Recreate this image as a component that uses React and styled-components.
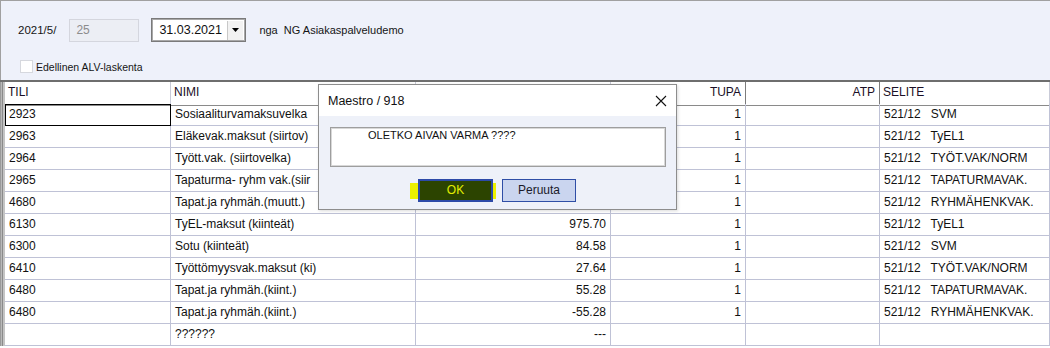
import React from 'react';
import styled, { createGlobalStyle } from 'styled-components';

const Global = createGlobalStyle`
  body {
    margin: 0;
    background: #ffffff;
    font-family: "Liberation Sans", Arial, sans-serif;
    font-size: 12px;
    color: #111;
  }
`;

const Window = styled.div`
  position: relative;
  width: 1050px;
  height: 348px;
  overflow: hidden;
  background: #fff;
`;

const TopPanel = styled.div`
  height: 79px;
  background: #eef1fa;
  border-top: 1px solid #a0a0a0;
  border-left: 1px solid #a0a0a0;
  display: flex;
  flex-direction: column;
  padding-left: 17px;
`;

const FilterRow = styled.div`
  display: flex;
  align-items: center;
  height: 24px;
  margin-top: 17px;
`;

const Label = styled.span`
  font-size: ${p => p.size || 11.5}px;
  white-space: pre;
  color: #151515;
`;

const DisabledInput = styled.div`
  width: 70px;
  height: 23px;
  box-sizing: border-box;
  border: 1px solid #d4d6de;
  background: #eceef4;
  color: #8c8c8c;
  font-size: 12px;
  line-height: 21px;
  padding-left: 6px;
  margin-left: 13px;
`;

const DateCombo = styled.div`
  width: 95px;
  height: 24px;
  box-sizing: border-box;
  border: 1px solid #7a7a7a;
  box-shadow: inset 0 0 0 1px #a8a8a8;
  background: #fff;
  margin-left: 12px;
  display: flex;
  align-items: center;
  padding-left: 7px;
  font-size: 12.5px;
  margin-right: 13px;
`;

const DateText = styled.span`
  flex: 1;
`;

const DropButton = styled.div`
  width: 15px;
  height: 19px;
  margin-right: 2px;
  background: #f2f2f2;
  border-left: 1px solid #c8c8c8;
  display: flex;
  align-items: center;
  justify-content: center;
`;

const CheckRow = styled.div`
  display: flex;
  align-items: center;
  margin-top: 18px;
  margin-left: 2px;
`;

const CheckBox = styled.span`
  width: 11px;
  height: 11px;
  border: 1px solid #d6d8de;
  background: #fff;
  margin-right: 3px;
`;

const Grid = styled.div`
  display: grid;
  grid-template-columns: 5px 166px 245px 195px 135px 134px 1fr;
  grid-auto-rows: 22px;
  border-top: 2px solid #6e6e6e;
`;

const Frame = styled.div`
  grid-row: 1 / span 12;
  background: linear-gradient(to right, #9a9a9a 0 1px, #b9b9b9 1px 2px, #8a8a8a 2px 3px, #c4c4c4 3px 5px);
`;

const HeadCell = styled.div`
  height: 24px;
  box-sizing: border-box;
  border-right: 1px solid ${p => (p.dark ? '#7c7c7c' : '#c9cbd8')};
  border-bottom: 1px solid #8a8a8a;
  padding: 3px 4px 0 3px;
  text-align: ${p => (p.right ? 'right' : 'left')};
  color: #1a0f26;
  font-size: 12px;
`;

const Cell = styled.div`
  box-sizing: border-box;
  border-right: 1px solid #bfc2d6;
  border-bottom: 1px solid #bfc2d6;
  padding: 3px 4px 0 4px;
  text-align: ${p => (p.right ? 'right' : 'left')};
  white-space: pre;
  overflow: hidden;
  ${p => p.focus && 'outline: 1px solid #000; outline-offset: -1px; border-right-color: #000;'}
`;

const HeadRow = styled.div`
  display: contents;
  & > div { height: 24px; }
`;

const Dialog = styled.div`
  position: absolute;
  left: 318px;
  top: 84px;
  width: 359px;
  height: 126px;
  box-sizing: border-box;
  border: 1px solid #8d8d8d;
  background: #eef1f9;
  box-shadow: 1px 1px 3px rgba(0, 0, 0, 0.15);
  display: flex;
  flex-direction: column;
`;

const TitleBar = styled.div`
  height: 31px;
  background: #fff;
  display: flex;
  align-items: center;
  justify-content: space-between;
  padding: 0 9px 0 9px;
  font-size: 12.5px;
`;

const MessageBox = styled.div`
  margin: 11px 10px 0 11px;
  height: 40px;
  box-sizing: border-box;
  border: 1px solid #9e9e9e;
  box-shadow: inset 0 0 0 1px #d8d8d8;
  background: #fff;
  padding: 1px 0 0 37px;
  font-size: 11px;
`;

const Buttons = styled.div`
  display: flex;
  margin: 12px 0 0 91px;
  gap: 9px;
`;

const OkWrap = styled.div`
  position: relative;
  width: 83px;
  height: 23px;
  display: flex;
  justify-content: flex-end;
`;

const Highlight = styled.span`
  position: absolute;
  left: 0;
  top: 4px;
  width: 86px;
  height: 16px;
  background: #ecf000;
`;

const OkButton = styled.div`
  position: relative;
  width: 75px;
  height: 23px;
  box-sizing: border-box;
  border: 2px solid #2d4aa8;
  background: #2c4400;
  color: #e4ef00;
  font-size: 12px;
  text-align: center;
  line-height: 19px;
`;

const CancelButton = styled.div`
  width: 74px;
  height: 23px;
  box-sizing: border-box;
  border: 1px solid #2f4ea6;
  background: #cad5ef;
  color: #1a1a2a;
  font-size: 12px;
  text-align: center;
  line-height: 20px;
`;

const rows = [
  ['2923', 'Sosiaaliturvamaksuvelka', '', '1', '', '521/12   SVM'],
  ['2963', 'Eläkevak.maksut (siirtov)', '', '1', '', '521/12   TyEL1'],
  ['2964', 'Tyött.vak. (siirtovelka)', '', '1', '', '521/12   TYÖT.VAK/NORM'],
  ['2965', 'Tapaturma- ryhm vak.(siir', '', '1', '', '521/12   TAPATURMAVAK.'],
  ['4680', 'Tapat.ja ryhmäh.(muutt.)', '', '1', '', '521/12   RYHMÄHENKVAK.'],
  ['6130', 'TyEL-maksut (kiinteät)', '975.70', '1', '', '521/12   TyEL1'],
  ['6300', 'Sotu (kiinteät)', '84.58', '1', '', '521/12   SVM'],
  ['6410', 'Työttömyysvak.maksut (ki)', '27.64', '1', '', '521/12   TYÖT.VAK/NORM'],
  ['6480', 'Tapat.ja ryhmäh.(kiint.)', '55.28', '1', '', '521/12   TAPATURMAVAK.'],
  ['6480', 'Tapat.ja ryhmäh.(kiint.)', '-55.28', '1', '', '521/12   RYHMÄHENKVAK.'],
  ['', '??????', '---', '', '', ''],
];

export default function App() {
  return (
    <Window>
      <Global />
      <TopPanel>
        <FilterRow>
          <Label>2021/5/</Label>
          <DisabledInput>25</DisabledInput>
          <DateCombo>
            <DateText>31.03.2021</DateText>
            <DropButton>
              <svg width="7" height="4" viewBox="0 0 7 4">
                <path d="M0 0 L7 0 L3.5 4 Z" fill="#000" />
              </svg>
            </DropButton>
          </DateCombo>
          <Label size={11}>{'nga  NG Asiakaspalveludemo'}</Label>
        </FilterRow>
        <CheckRow>
          <CheckBox />
          <Label size={10.5}>Edellinen ALV-laskenta</Label>
        </CheckRow>
      </TopPanel>

      <Grid>
        <Frame />
        <HeadRow>
          <HeadCell>TILI</HeadCell>
          <HeadCell>NIMI</HeadCell>
          <HeadCell right />
          <HeadCell right dark>TUPA</HeadCell>
          <HeadCell right dark>ATP</HeadCell>
          <HeadCell>SELITE</HeadCell>
        </HeadRow>
        {rows.map((r, i) => (
          <React.Fragment key={i}>
            <Cell focus={i === 0}>{r[0]}</Cell>
            <Cell>{r[1]}</Cell>
            <Cell right>{r[2]}</Cell>
            <Cell right>{r[3]}</Cell>
            <Cell right>{r[4]}</Cell>
            <Cell>{r[5]}</Cell>
          </React.Fragment>
        ))}
      </Grid>

      <Dialog>
        <TitleBar>
          <span>Maestro / 918</span>
          <svg width="12" height="12" viewBox="0 0 12 12">
            <path d="M1 1 L11 11 M11 1 L1 11" stroke="#111" strokeWidth="1.1" />
          </svg>
        </TitleBar>
        <MessageBox>OLETKO AIVAN VARMA ????</MessageBox>
        <Buttons>
          <OkWrap>
            <Highlight />
            <OkButton>OK</OkButton>
          </OkWrap>
          <CancelButton>Peruuta</CancelButton>
        </Buttons>
      </Dialog>
    </Window>
  );
}
